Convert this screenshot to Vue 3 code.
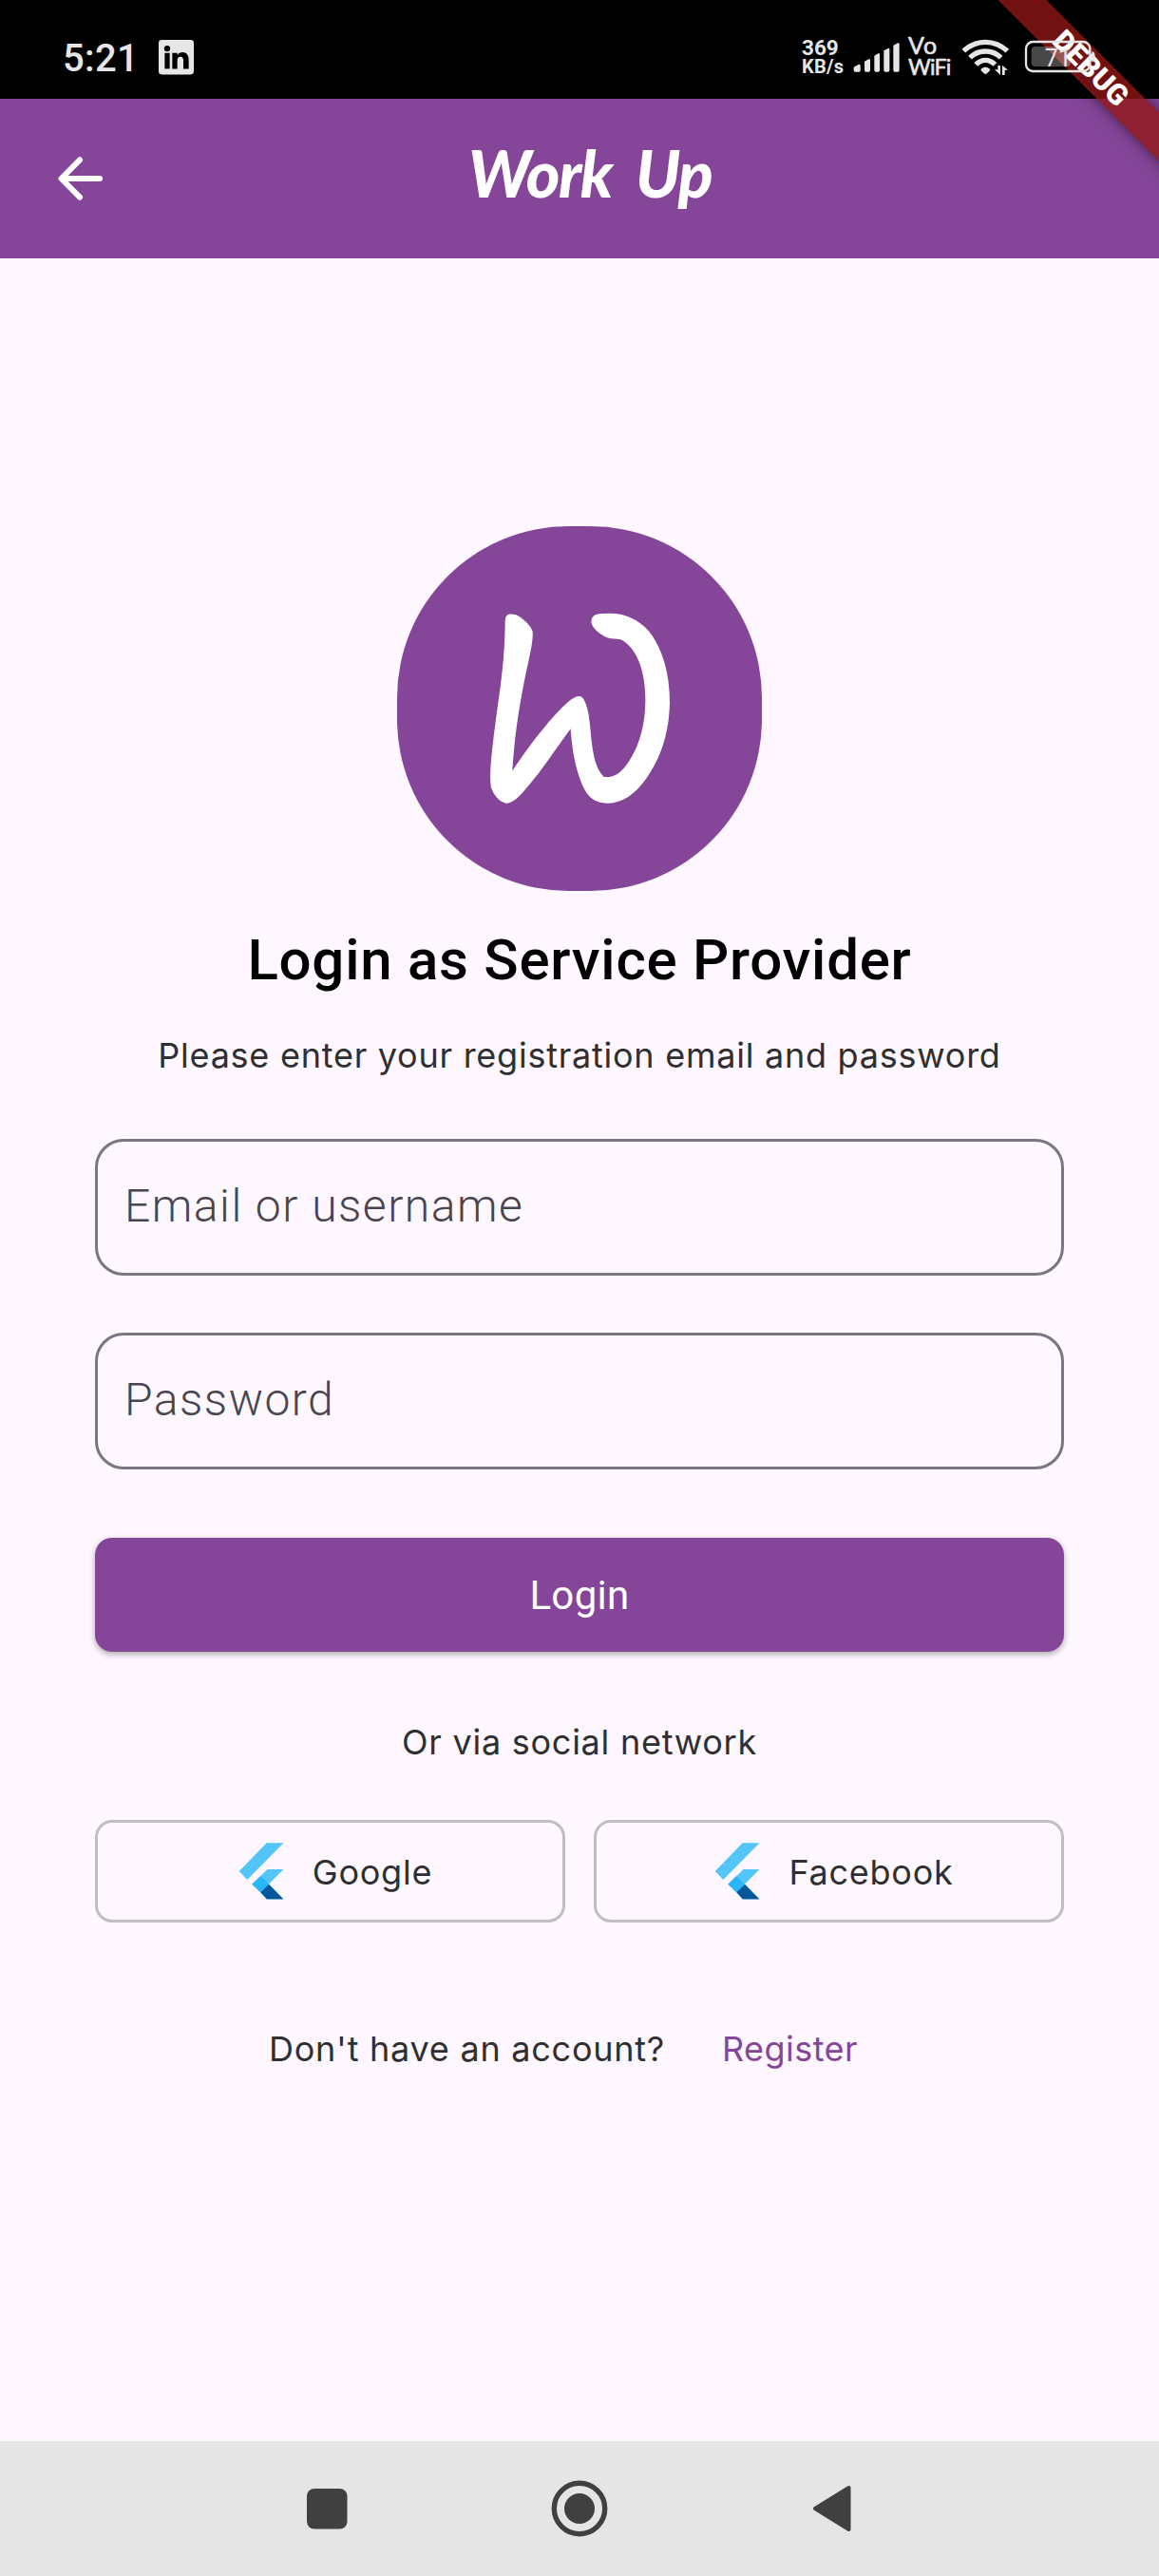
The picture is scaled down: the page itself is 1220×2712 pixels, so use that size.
<script setup>
import { ref } from 'vue'

const fields = ref([
  { id: 'email', label: 'Email or username' },
  { id: 'password', label: 'Password' },
])
const networks = ['Google', 'Facebook']
const signalBars = [
  'M236 212 L251 204 Q257 202 257 208 V222 Q257 227 252 227 H241 Q236 227 236 222Z',
  'M270 194 L283 187 Q288 185 288 190 V222 Q288 227 283 227 H275 Q270 227 270 222Z',
  'M301 176 L313 169 Q318 167 318 172 V222 Q318 227 313 227 H306 Q301 227 301 222Z',
  'M331 160 L344 153 Q349 151 349 156 V222 Q349 227 344 227 H336 Q331 227 331 222Z',
  'M361 144 L375 136 Q380 134 380 139 V222 Q380 227 375 227 H366 Q361 227 361 222Z',
]
</script>

<template>
  <div class="screen">
    <header class="status">
      <div class="status-left">
        <span class="time">5:21</span>
        <svg class="linkedin" viewBox="501 127 111 109">
          <rect x="501" y="127" width="111" height="109" rx="10" fill="#e6e6e6" />
          <circle cx="528" cy="154" r="9.5" />
          <path d="M520 168h16v50h-16z" />
          <path d="M544 168h16v7q6-9 17-9 18 0 19 24v28h-17v-26q0-12-9-12-10 0-10 12v26h-16z" />
        </svg>
      </div>
      <div class="status-right">
        <div class="speed"><span class="rate">369</span><span class="unit">KB/s</span></div>
        <svg width="60" height="104" viewBox="216 0 180 312" fill="#e6e6e6">
          <path v-for="bar in signalBars" :key="bar" :d="bar" />
        </svg>
        <div class="vowifi"><span class="vo">Vo</span><span class="wifi">WiFi</span></div>
        <svg width="68" height="104" viewBox="546 0 204 312" fill="none" stroke="#e6e6e6" stroke-width="16">
          <path d="M583 161 Q613 133 652 133 T721 161" />
          <path d="M603 182 Q624 162 652 162 T701 182" />
          <path d="M622 204 Q635 190 652 190 T682 204" />
          <path d="M637 219 Q652 204 667 219 Q667 225 652 235 Q637 225 637 219Z" fill="#e6e6e6" stroke="none" />
          <path d="M699 207 V237 L681 220 H691 V207Z M705 237 V206 L723 221 H713 V237Z" fill="#e6e6e6" stroke="none" />
        </svg>
        <svg width="90" height="104" viewBox="750 0 270 312">
          <rect x="797" y="147" width="124" height="63" rx="12" fill="#fff" fill-opacity=".28" />
          <rect x="780" y="132" width="202" height="93" rx="22" fill="none" stroke="#e6e6e6" stroke-width="7" />
          <path d="M988 163q10 0 10 16t-10 16z" fill="#e6e6e6" />
          <text x="839" y="209" class="level">71</text>
        </svg>
      </div>
    </header>

    <div class="appbar">
      <svg class="back" width="47" height="48" viewBox="0 0 47 48" fill="none" stroke="#fff" stroke-width="6" stroke-linecap="round" stroke-linejoin="round">
        <path d="M44 24H4M23 4.300 3.500 24 23 43.700" />
      </svg>
      <h1>Work Up</h1>
    </div>

    <main>
      <svg class="logo" viewBox="54 42 1152 1152">
        <rect x="54" y="42" width="1152" height="1152" rx="542" fill="#85469a" />
        <path
          fill="#fff"
          d="M395 345C396 320 404 316 430 322C452 332 476 356 482 375C484 405 474 445 460 510C440 610 426 690 418 815C480 720 550 635 600 592C622 576 636 574 644 590C660 620 662 660 666 700C672 770 684 812 706 833C735 838 755 824 775 800C818 745 838 670 838 590C838 500 812 430 765 402C750 396 738 401 718 394C690 382 667 360 667 342C670 322 682 318 710 318C775 314 815 338 848 372C894 430 915 510 915 600C913 690 890 770 840 840C805 890 765 916 720 917C672 917 652 892 635 850C614 795 606 740 602 682C555 745 510 815 470 860C440 897 418 917 398 917C376 913 358 890 350 865C346 830 350 785 354 750C370 600 394 500 395 345Z"
        />
      </svg>
      <h2>Login as Service Provider</h2>
      <p class="hint">Please enter your registration email and password</p>

      <form class="form" @submit.prevent>
        <label v-for="f in fields" :key="f.id" class="field">{{ f.label }}</label>
        <button class="login">Login</button>
      </form>

      <p class="or">Or via social network</p>
      <div class="social">
        <button v-for="name in networks" :key="name">
          <svg width="60" height="60" viewBox="0 0 60 60">
            <path fill="#54c5f8" d="M35.600.300H53.500L15.300 39 6.700 30z" />
            <path fill="#54c5f8" d="M36.500 28H53.500L29.200 52.300 20.300 43.700z" />
            <path fill="#29b6f6" d="M29.200 35 38.100 43.700 29.200 52.300 20.300 43.700z" />
            <path fill="#01579b" d="M38.100 43.700 53.500 59.500H35.800L29.200 52.300z" />
          </svg>
          <span>{{ name }}</span>
        </button>
      </div>

      <div class="register">
        <span>Don't have an account?</span>
        <a>Register</a>
      </div>
    </main>

    <nav class="navbar">
      <svg width="60" height="60" viewBox="0 0 60 60"><rect x="9" y="9" width="42.500" height="42.500" rx="8" fill="#404040" /></svg>
      <svg width="60" height="60" viewBox="0 0 60 60"><circle cx="30" cy="30" r="26.700" fill="none" stroke="#404040" stroke-width="5.400" /><circle cx="30" cy="30" r="16" fill="#404040" /></svg>
      <svg width="60" height="60" viewBox="0 0 60 60"><path d="M12 30 47.500 8V52Z" fill="#404040" stroke="#404040" stroke-width="4" stroke-linejoin="round" /></svg>
    </nav>

    <div class="banner">DEBUG</div>
  </div>
</template>

<style>
body { background: #fef7ff; }
</style>

<style scoped>
.screen {
  position: relative;
  display: flex;
  flex-direction: column;
  width: 1220px;
  height: 2712px;
  overflow: hidden;
  background: #fef7ff;
  color: #2f2f31;
  font-family: Inter, sans-serif;
}
h1, h2, p { margin: 0; }
svg { display: block; flex: none; }
button { background: none; border: 0; padding: 0; color: inherit; font: inherit; letter-spacing: inherit; }

.status {
  display: flex;
  justify-content: space-between;
  height: 104px;
  background: #000;
  color: #e6e6e6;
  font-family: Roboto, sans-serif;
}
.status-left { display: flex; align-items: center; padding: 17px 0 0 66px; }
.time { margin-top: 3px; width: 101px; font-size: 40px; font-weight: 500; letter-spacing: .3px; line-height: 48px; }
.linkedin { width: 37px; height: 36.500px; }
.status-right { position: relative; z-index: 3; display: flex; padding-right: 60px; }
.speed { display: flex; flex-direction: column; width: 48px; padding-top: 41px; font-weight: 700; line-height: 19.500px; white-space: nowrap; }
.rate { font-size: 22.500px; }
.unit { font-size: 20px; letter-spacing: .3px; }
.vowifi { display: flex; flex-direction: column; width: 46px; margin-left: 4px; padding-top: 36px; font-family: Lato, sans-serif; line-height: 23px; white-space: nowrap; -webkit-text-stroke: .6px #e6e6e6; }
.vo { font-size: 25px; letter-spacing: 1px; }
.wifi { font-size: 23px; letter-spacing: -.8px; }
.level { font: 400 75px Roboto, sans-serif; fill: #e6e6e6; }

.appbar { display: flex; align-items: center; height: 168px; padding-left: 61px; background: #85469a; }
h1 {
  margin-left: 385px;
  padding-bottom: 13px;
  color: #fff;
  font: italic 900 68px/84px Lato, sans-serif;
  letter-spacing: -1.500px;
  word-spacing: 12px;
}

main { display: flex; flex: 1; flex-direction: column; align-items: center; padding: 282px 100px 0; font-size: 36px; line-height: 44px; letter-spacing: .75px; }
.logo { width: 384px; height: 384px; }
h2 { margin-top: 38px; color: #000; font: 500 60px/70px Roboto, sans-serif; letter-spacing: .75px; }
.hint { margin-top: 43px; }
.form { display: flex; flex-direction: column; width: 100%; margin-top: 66px; }
.field {
  display: flex;
  align-items: center;
  box-sizing: border-box;
  height: 144px;
  margin-bottom: 60px;
  padding: 0 28px 3px;
  border: 3px solid #7a757f;
  border-radius: 30px;
  color: #49454f;
  font: 300 48px/56px Roboto, sans-serif;
  letter-spacing: 1.500px;
}
.login {
  height: 120px;
  margin-top: 12px;
  padding-top: 2px;
  border-radius: 18px;
  background: #85469a;
  box-shadow: 0 3px 6px rgba(0, 0, 0, .26), 0 1px 8px rgba(0, 0, 0, .08);
  color: #fff;
  font: 400 42px/50px Roboto, sans-serif;
  letter-spacing: .3px;
}
.or { margin-top: 73px; }
.social { display: flex; gap: 30px; width: 100%; margin-top: 60px; }
.social button {
  display: flex;
  flex: 1;
  gap: 24px;
  align-items: center;
  justify-content: center;
  box-sizing: border-box;
  height: 108px;
  padding-left: 5px;
  border: 3px solid #c1bec2;
  border-radius: 18px;
}
.social span { padding-top: 2px; }
.register { display: flex; gap: 60px; margin-top: 111px; padding-right: 34px; }
.register a { color: #85469a; letter-spacing: .45px; }

.navbar { display: flex; justify-content: center; gap: 206px; align-items: center; height: 142px; background: #e5e5e5; }

.banner {
  position: absolute;
  z-index: 2;
  top: 54px;
  left: 998px;
  width: 300px;
  height: 36px;
  transform: rotate(45deg);
  background: linear-gradient(rgba(183, 28, 28, .627), rgba(183, 28, 28, .627)), rgba(0, 0, 0, .44);
  box-shadow: 0 0 18px rgba(0, 0, 0, .5);
  color: #fff;
  font: 900 30.600px/36px Roboto, sans-serif;
  text-align: center;
}
</style>
